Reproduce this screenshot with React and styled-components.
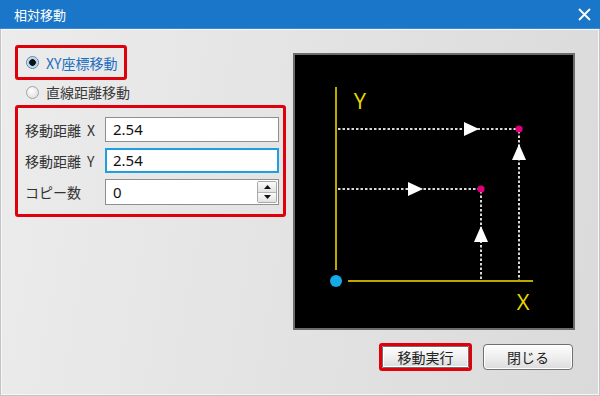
import styled, { createGlobalStyle } from "styled-components";

const GlobalStyle = createGlobalStyle`
  html, body {
    margin: 0;
    padding: 0;
    background: #dcdcdc;
  }
  body {
    font-family: "Noto Sans CJK JP", "Noto Sans", sans-serif;
  }
`;

const Window = styled.div`
  width: 600px;
  height: 396px;
  display: flex;
  flex-direction: column;
  overflow: hidden;
`;

const TitleBar = styled.div`
  height: 29px;
  flex: none;
  display: flex;
  align-items: center;
  justify-content: space-between;
  padding: 0 9px 0 14px;
  background: #1976c8;
  border-bottom: 1px solid #3a8ad4;
  box-sizing: border-box;
`;

const Title = styled.span`
  color: #ffffff;
  font-size: 13px;
  line-height: 1;
`;

const Body = styled.div`
  flex: 1;
  display: flex;
  flex-direction: column;
  padding: 16px 26px 0 15px;
  background: linear-gradient(100deg, #ececec 0%, #e2e2e2 55%, #dadada 100%);
  border-left: 1px solid #c4c4c4;
  border-right: 1px solid #c4c4c4;
  border-bottom: 1px solid #c4c4c4;
  box-shadow: inset 1px 1px 0 #f6f6f6, inset -1px -1px 0 #f6f6f6;
  box-sizing: border-box;
`;

const Main = styled.div`
  display: flex;
  align-items: flex-start;
`;

const LeftColumn = styled.div`
  width: 271px;
  flex: none;
  display: flex;
  flex-direction: column;
  margin-left: -1px;
`;

const Highlight = styled.div`
  border: 3px solid #e0000c;
  border-radius: 3px;
  box-sizing: border-box;
`;

const OptionBox = styled(Highlight)`
  width: 112px;
  height: 35px;
  display: flex;
  align-items: center;
  padding-left: 8px;
`;

const FieldsBox = styled(Highlight)`
  height: 112px;
  display: flex;
  flex-direction: column;
  gap: 6px;
  padding: 9px 4px 9px 7px;
`;

const RadioRow = styled.label`
  display: flex;
  align-items: center;
  gap: 7px;
  height: 16px;
  font-size: 14px;
  line-height: 1;
  color: ${({ $active }) => ($active ? "#1c6fc2" : "#3a3a3a")};
  padding-left: ${({ $inset }) => ($inset ? "11px" : "0")};
  margin: ${({ $inset }) => ($inset ? "4px 0 5px" : "0")};
`;

const RadioDot = styled.span`
  width: 13px;
  height: 13px;
  border-radius: 50%;
  box-sizing: border-box;
  border: 1px solid ${({ $checked }) => ($checked ? "#5a86a8" : "#a4a4a4")};
  background: ${({ $checked }) =>
    $checked
      ? "radial-gradient(circle, #111 0 3px, #9cc4e4 3.5px, #e8f2fa 6px)"
      : "radial-gradient(circle at 40% 35%, #ffffff 0, #e8e8e8 60%, #d4d4d4 100%)"};
  flex: none;
`;

const FieldRow = styled.div`
  display: flex;
  align-items: center;
`;

const FieldLabel = styled.span`
  width: 80px;
  flex: none;
  font-size: 14px;
  color: #333333;
  line-height: 1;
`;

const Axis = styled.span`
  margin-left: 6px;
`;

const TextInput = styled.div`
  flex: 1;
  height: ${({ $tall }) => ($tall ? "26px" : "25px")};
  display: flex;
  align-items: center;
  background: #ffffff;
  box-sizing: border-box;
  border: ${({ $focused }) => ($focused ? "2px solid #1f9fe2" : "1px solid #8f8f8f")};
  padding-left: ${({ $focused }) => ($focused ? "6px" : "7px")};
  font-family: "Noto Sans", "Liberation Sans", sans-serif;
  font-size: 15px;
  color: #111111;
`;

const InputValue = styled.span`
  flex: 1;
  line-height: 1;
`;

const SpinBox = styled.div`
  width: 20px;
  align-self: stretch;
  margin: 1px;
  display: flex;
  flex-direction: column;
  border: 1px solid #a8a8a8;
  border-radius: 2px;
  box-sizing: border-box;
  overflow: hidden;
`;

const SpinHalf = styled.div`
  flex: 1;
  display: flex;
  align-items: center;
  justify-content: center;
  background: linear-gradient(#fbfbfb, #e2e2e2);
  & + & {
    border-top: 1px solid #b4b4b4;
  }
`;

const Canvas = styled.div`
  width: 282px;
  height: 277px;
  flex: none;
  margin: 8px 0 0 7px;
  background: #000000;
  border: 2px solid #6c6c6c;
  box-sizing: border-box;
  svg {
    display: block;
  }
`;

const ButtonRow = styled.div`
  display: flex;
  justify-content: flex-end;
  align-items: center;
  gap: 11px;
  margin-top: 13px;
`;

const ButtonFrame = styled(Highlight)`
  width: 93px;
  height: 28px;
  display: flex;
`;

const Button = styled.button`
  width: ${({ $fill }) => ($fill ? "100%" : "90px")};
  height: ${({ $fill }) => ($fill ? "100%" : "26px")};
  padding: 0;
  margin: 0;
  border: 1px solid #707070;
  border-radius: ${({ $fill }) => ($fill ? "1px" : "4px")};
  background: linear-gradient(#fdfdfd 0%, #efefef 50%, #dcdcdc 100%);
  box-shadow: inset 0 0 0 1px #ffffff;
  font-family: "Noto Sans CJK JP", sans-serif;
  font-size: 14px;
  color: #222222;
  line-height: 1;
  box-sizing: border-box;
`;

const Arrow = ({ x, y, dir }) => {
  const pts =
    dir === "right"
      ? `${x - 7},${y - 7} ${x + 8},${y} ${x - 7},${y + 7}`
      : `${x - 7},${y + 8} ${x},${y - 8} ${x + 7},${y + 8}`;
  return <polygon points={pts} fill="#ffffff" />;
};

const Diagram = () => {
  const axis = "#bba900";
  const dot = "#e2007a";
  const dash = { stroke: "#d8d8d8", strokeWidth: 2, strokeDasharray: "2.5 2" };
  return (
    <svg width="278" height="273" viewBox="0 0 278 273">
      <line x1="41" y1="32" x2="41" y2="215" stroke={axis} strokeWidth="2" />
      <line x1="53" y1="226" x2="238" y2="226" stroke={axis} strokeWidth="2" />
      <line x1="43" y1="74" x2="222" y2="74" {...dash} />
      <line x1="224" y1="76" x2="224" y2="225" {...dash} />
      <line x1="43" y1="134" x2="184" y2="134" {...dash} />
      <line x1="186" y1="136" x2="186" y2="225" {...dash} />
      <Arrow x={176} y={74} dir="right" />
      <Arrow x={120} y={134} dir="right" />
      <Arrow x={224} y={97} dir="up" />
      <Arrow x={186} y={179} dir="up" />
      <circle cx="224" cy="74" r="3.6" fill={dot} />
      <circle cx="186" cy="134" r="3.6" fill={dot} />
      <circle cx="41" cy="226" r="6" fill="#16aae8" />
      <text
        x="65"
        y="54"
        textAnchor="middle"
        fontFamily="'Open Sans', 'Noto Sans', sans-serif"
        fontSize="22"
        fill="#ecd800"
      >
        Y
      </text>
      <text
        x="228"
        y="255"
        textAnchor="middle"
        fontFamily="'Open Sans', 'Noto Sans', sans-serif"
        fontSize="22"
        fill="#ecd800"
      >
        X
      </text>
    </svg>
  );
};

export default function App() {
  return (
    <>
      <GlobalStyle />
      <Window>
        <TitleBar>
          <Title>相対移動</Title>
          <svg width="13" height="13" viewBox="0 0 13 13">
            <path d="M1 1 L12 12 M12 1 L1 12" stroke="#ffffff" strokeWidth="1.8" />
          </svg>
        </TitleBar>
        <Body>
          <Main>
            <LeftColumn>
              <OptionBox>
                <RadioRow $active>
                  <RadioDot $checked />
                  XY座標移動
                </RadioRow>
              </OptionBox>
              <RadioRow $inset>
                <RadioDot />
                直線距離移動
              </RadioRow>
              <FieldsBox>
                <FieldRow>
                  <FieldLabel>
                    移動距離<Axis>X</Axis>
                  </FieldLabel>
                  <TextInput>
                    <InputValue>2.54</InputValue>
                  </TextInput>
                </FieldRow>
                <FieldRow>
                  <FieldLabel>
                    移動距離<Axis>Y</Axis>
                  </FieldLabel>
                  <TextInput $focused>
                    <InputValue>2.54</InputValue>
                  </TextInput>
                </FieldRow>
                <FieldRow>
                  <FieldLabel>コピー数</FieldLabel>
                  <TextInput $tall>
                    <InputValue>0</InputValue>
                    <SpinBox>
                      <SpinHalf>
                        <svg width="7" height="4" viewBox="0 0 7 4">
                          <polygon points="0,4 3.5,0 7,4" fill="#111" />
                        </svg>
                      </SpinHalf>
                      <SpinHalf>
                        <svg width="7" height="4" viewBox="0 0 7 4">
                          <polygon points="0,0 7,0 3.5,4" fill="#111" />
                        </svg>
                      </SpinHalf>
                    </SpinBox>
                  </TextInput>
                </FieldRow>
              </FieldsBox>
            </LeftColumn>
            <Canvas>
              <Diagram />
            </Canvas>
          </Main>
          <ButtonRow>
            <ButtonFrame>
              <Button $fill>移動実行</Button>
            </ButtonFrame>
            <Button>閉じる</Button>
          </ButtonRow>
        </Body>
      </Window>
    </>
  );
}
